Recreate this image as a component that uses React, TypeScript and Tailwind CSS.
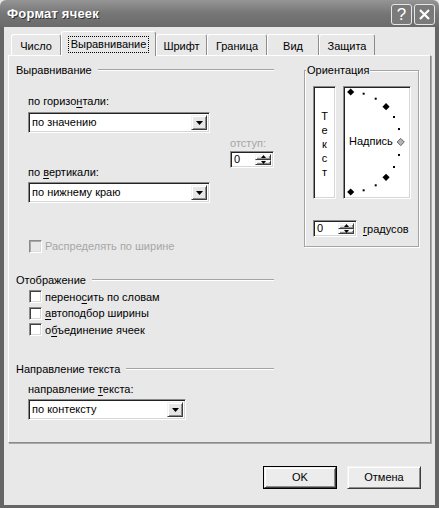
import React from "react";

const FONT = "font-['Liberation_Sans',Arial,sans-serif]";

function Tri({ up = false, small = false }: { up?: boolean; small?: boolean }) {
  const w = small ? 5 : 7;
  const h = small ? 3 : 4;
  const pts = up ? `0,${h} ${w / 2},0 ${w},${h}` : `0,0 ${w},0 ${w / 2},${h}`;
  return (
    <svg width={w} height={h} viewBox={`0 0 ${w} ${h}`} className="block">
      <polygon points={pts} fill="#000" />
    </svg>
  );
}

const sunken =
  "border border-t-[#8a8a8a] border-l-[#8a8a8a] border-r-white border-b-white shadow-[inset_1px_1px_0_#222,inset_-1px_-1px_0_#d6d6d6]";
const raised =
  "bg-[#e6e6e6] border border-t-[#f2f2f2] border-l-[#f2f2f2] border-r-[#3c3c3c] border-b-[#3c3c3c] shadow-[inset_1px_1px_0_#fff,inset_-1px_-1px_0_#8c8c8c]";

function ComboBox({ value, className }: { value: string; className: string }) {
  return (
    <div className={`flex h-[21px] bg-white p-[2px] ${sunken} ${className}`}>
      <div className="flex-1 flex items-center pl-[1px] text-[11px] text-black leading-none">{value}</div>
      <div className={`w-[16px] flex items-center justify-center ${raised}`}>
        <Tri />
      </div>
    </div>
  );
}

function Spin({ value }: { value: string }) {
  return (
    <div className={`flex w-[44px] h-[17px] bg-white p-[2px] ${sunken}`}>
      <div className="flex-1 flex items-center pl-[1px] text-[11px] leading-none text-black">{value}</div>
      <div className="w-[16px] flex flex-col">
        <div className={`flex-1 flex items-center justify-center ${raised}`}>
          <Tri up small />
        </div>
        <div className={`flex-1 flex items-center justify-center ${raised}`}>
          <Tri small />
        </div>
      </div>
    </div>
  );
}

function CheckBox({ label, disabled = false }: { label: React.ReactNode; disabled?: boolean }) {
  return (
    <div className="flex items-center h-[16.5px] gap-[3px]">
      <div
        className={`w-[13px] h-[13px] border border-t-[#8a8a8a] border-l-[#8a8a8a] border-r-white border-b-white ${
          disabled
            ? "bg-[#e8e8e8] shadow-[inset_1px_1px_0_#a8a8a8,inset_-1px_-1px_0_#dcdcdc]"
            : "bg-white shadow-[inset_1px_1px_0_#404040,inset_-1px_-1px_0_#d6d6d6]"
        }`}
      />
      <span className={`text-[11px] leading-[14px] ${disabled ? "text-[#a6a6a6]" : "text-black"}`}>{label}</span>
    </div>
  );
}

function GroupHeader({ label, className = "" }: { label: string; className?: string }) {
  return (
    <div className={`flex items-center h-[14px] ${className}`}>
      <span className="text-[11px] leading-[14px] text-black pr-[6px]">{label}</span>
      <div className="flex-1 h-[2px] border-t border-[#a4a4a4] border-b border-b-white" />
    </div>
  );
}

function U({ children }: { children: React.ReactNode }) {
  return <span className="underline underline-offset-[2px]">{children}</span>;
}

function Dial() {
  const cx = 5.7;
  const cy = 54;
  const r = 50;
  const angles = [90, 75, 60, 45, 30, 15, 0, -15, -30, -45, -60, -75, -90];
  return (
    <svg width={64} height={109} viewBox="0 0 64 109" className="block">
      {angles.map((a) => {
        const x = cx + r * Math.cos((a * Math.PI) / 180);
        const y = cy - r * Math.sin((a * Math.PI) / 180);
        if (a % 45 === 0) {
          const s = 3.6;
          const pts = `${x},${y - s} ${x + s},${y} ${x},${y + s} ${x - s},${y}`;
          return a === 0 ? (
            <polygon key={a} points={pts} fill="#b4b4b4" stroke="#444" strokeWidth={0.8} />
          ) : (
            <polygon key={a} points={pts} fill="#000" />
          );
        }
        return <rect key={a} x={x - 1} y={y - 1} width={2} height={2} fill="#000" />;
      })}
    </svg>
  );
}

const tabs = [
  { label: "Число", w: "w-[50px]" },
  { label: "Выравнивание", w: "w-[95px]", active: true },
  { label: "Шрифт", w: "w-[51px]" },
  { label: "Граница", w: "w-[60px]" },
  { label: "Вид", w: "w-[52px]" },
  { label: "Защита", w: "w-[56px]" },
];

export default function App() {
  return (
    <div className={`w-[439px] h-[508px] flex flex-col overflow-hidden bg-[#e8e8e8] ${FONT}`}>
      {/* Title bar */}
      <div className="h-[27px] shrink-0 flex items-center justify-between pl-[7px] pr-[4px] pt-[1px] bg-gradient-to-b from-[#959595] via-[#767676] to-[#6a6a6a] rounded-t-[6px]">
        <span className="text-[13px] font-bold text-white tracking-[0.2px] [text-shadow:1px_1px_0_#333]">
          Формат ячеек
        </span>
        <div className="flex gap-[2px]">
          <div className="w-[21px] h-[21px] rounded-[3px] border border-[#e6e6e6] bg-[#7a7a7a] flex items-center justify-center text-white text-[17px] leading-none">
            ?
          </div>
          <div className="w-[21px] h-[21px] rounded-[3px] border border-[#e6e6e6] bg-[#7a7a7a] flex items-center justify-center">
            <svg width="13" height="13" viewBox="0 0 13 13">
              <path d="M2 2 L11 11 M11 2 L2 11" stroke="#fff" strokeWidth="2.2" />
            </svg>
          </div>
        </div>
      </div>

      {/* Body */}
      <div className="flex-1 flex flex-col border-l-[4px] border-r-[4px] border-b-[3px] border-[#666] px-[4px]">
        {/* Tabs */}
        <div className="h-[28px] shrink-0 flex items-end pl-[3px] relative z-10">
          {tabs.map((t) =>
            t.active ? (
              <div
                key={t.label}
                className={`${t.w} h-[25px] -mb-[1px] bg-[#e8e8e8] border border-b-0 border-t-white border-l-white border-r-[#8c8c8c] rounded-t-[3px] flex items-start justify-center pt-[4px]`}
              >
                <span className="text-[11px] leading-[15px] px-[2px] border border-dotted border-black">{t.label}</span>
              </div>
            ) : (
              <div
                key={t.label}
                className={`${t.w} h-[21px] bg-[#e8e8e8] border border-b-0 border-t-white border-l-white border-r-[#8c8c8c] rounded-t-[3px] flex items-center justify-center pt-[2px] text-[11px]`}
              >
                {t.label}
              </div>
            )
          )}
        </div>

        {/* Panel */}
        <div className="h-[388px] shrink-0 flex border border-t-white border-l-white border-r-[#8a8a8a] border-b-[#8a8a8a] shadow-[1px_1px_0_#a8a8a8]">
          {/* Left column */}
          <div className="w-[265px] pl-[7px] pt-[7px] flex flex-col">
            <GroupHeader label="Выравнивание" />
            <div className="flex">
              <div className="ml-[12px] w-[182px] flex flex-col">
                <div className="mt-[17px] text-[11px] leading-[14px]">
                  по горизо<U>н</U>тали:
                </div>
                <ComboBox value="по значению" className="mt-[4px] w-[182px]" />
                <div className="mt-[32px] text-[11px] leading-[14px]">
                  по <U>в</U>ертикали:
                </div>
                <ComboBox value="по нижнему краю" className="mt-[3px] w-[182px]" />
              </div>
              <div className="ml-[20px] flex flex-col pt-[59px]">
                <div className="text-[11px] leading-[14px] text-[#a6a6a6]">отступ:</div>
                <div className="mt-[1px]">
                  <Spin value="0" />
                </div>
              </div>
            </div>

            <div className="ml-[13px] mt-[35px]">
              <CheckBox label="Распределять по ширине" disabled />
            </div>

            <GroupHeader label="Отображение" className="mt-[18px]" />
            <div className="ml-[13px] mt-[2px] flex flex-col">
              <CheckBox
                label={
                  <>
                    перено<U>с</U>ить по словам
                  </>
                }
              />
              <CheckBox
                label={
                  <>
                    <U>а</U>втоподбор ширины
                  </>
                }
              />
              <CheckBox
                label={
                  <>
                    о<U>б</U>ъединение ячеек
                  </>
                }
              />
            </div>

            <GroupHeader label="Направление текста" className="mt-[24px]" />
            <div className="ml-[12px] mt-[6px] text-[11px] leading-[14px]">
              направление <U>т</U>екста:
            </div>
            <ComboBox value="по контексту" className="ml-[12px] mt-[3px] w-[158px]" />
          </div>

          {/* Orientation group */}
          <div className="ml-[30px] mt-[14px] w-[115px] h-[177px] relative border border-[#a4a4a4] shadow-[inset_1px_1px_0_#fff,1px_1px_0_#fff] flex flex-col pl-[8px] pt-[15px]">
            <span className="absolute -top-[8px] left-[1px] px-[1px] bg-[#e8e8e8] text-[11px] leading-[14px]">
              Ориентация
            </span>
            <div className="flex gap-[7px]">
              <div className={`w-[23px] h-[113px] bg-white ${sunken} flex flex-col items-center pt-[22px] text-[11px] leading-[14px]`}>
                <span>Т</span>
                <span>е</span>
                <span>к</span>
                <span>с</span>
                <span>т</span>
              </div>
              <div className={`w-[68px] h-[113px] bg-white ${sunken} p-[1px] relative`}>
                <Dial />
                <span className="absolute left-[5px] top-[47px] text-[11px] leading-[14px]">Надпись</span>
              </div>
            </div>
            <div className="mt-[21px] flex items-center">
              <Spin value="0" />
              <span className="ml-[6px] text-[11px] leading-[14px]">
                <U>г</U>радусов
              </span>
            </div>
          </div>
        </div>

        {/* Footer buttons */}
        <div className="flex justify-end gap-[10px] pr-[10px] mt-[23px]">
          <div className="w-[74px] h-[23px] border border-black">
            <div className={`w-full h-full flex items-center justify-center text-[11px] ${raised} bg-[#ececec]`}>OK</div>
          </div>
          <div className={`w-[74px] h-[23px] flex items-center justify-center text-[11px] ${raised} bg-[#ececec]`}>
            Отмена
          </div>
        </div>
      </div>
    </div>
  );
}
